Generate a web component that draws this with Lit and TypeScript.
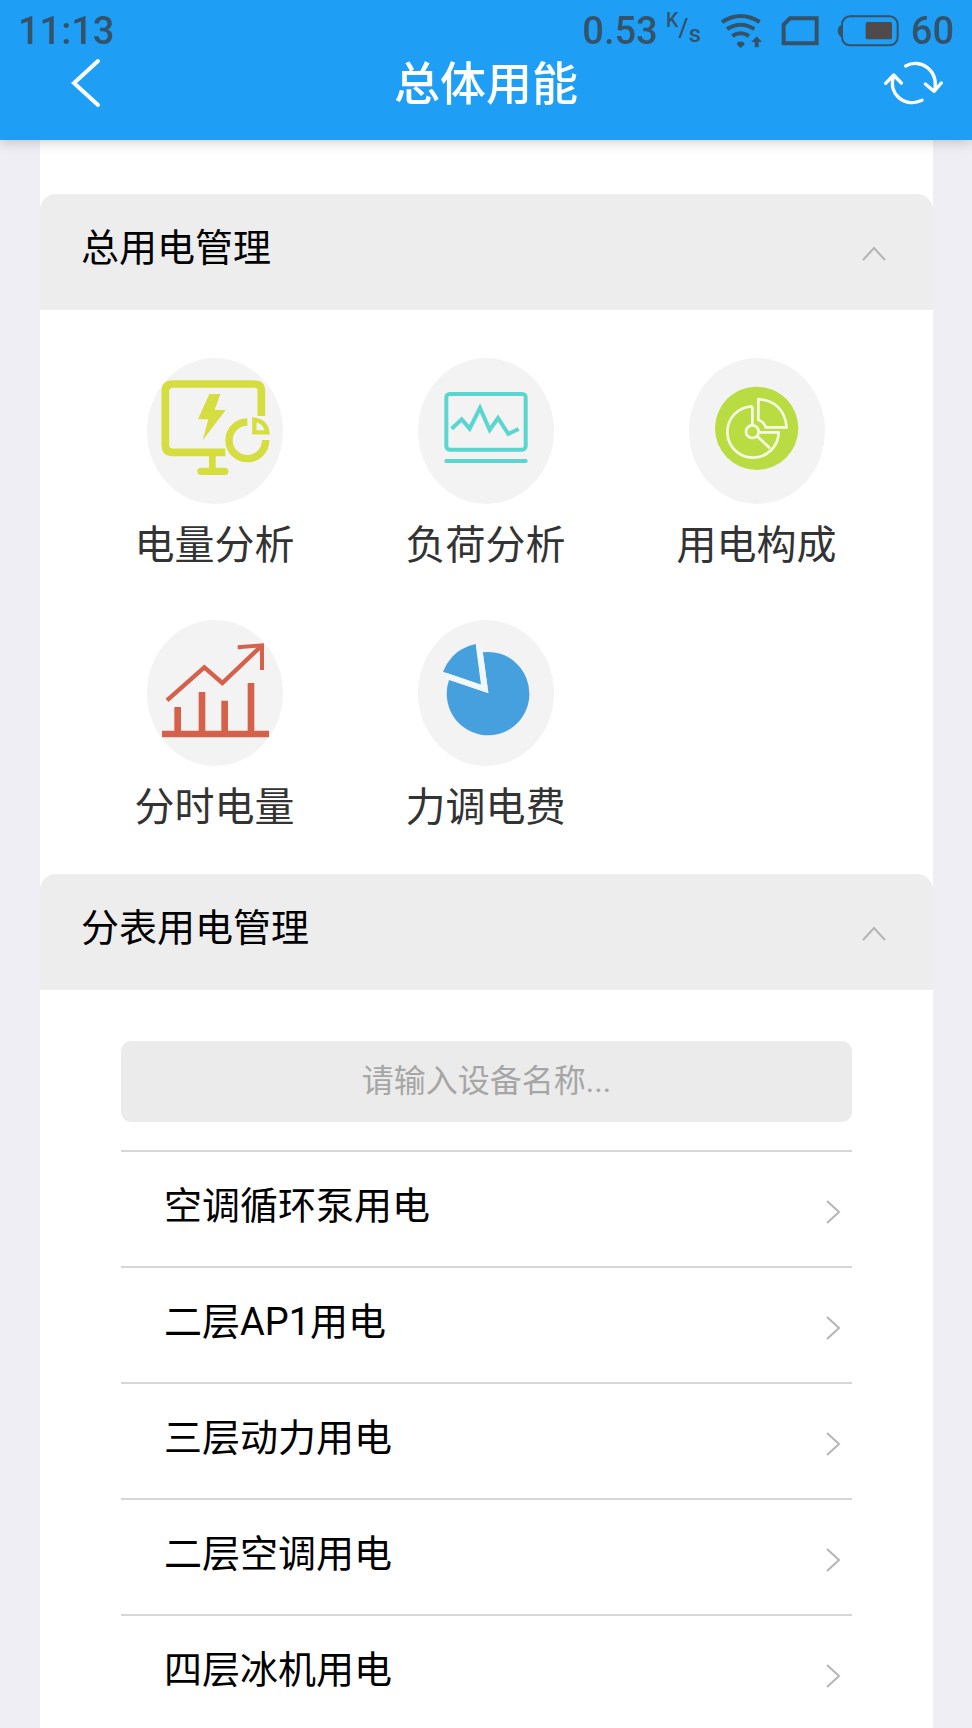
import { LitElement, html, css, svg } from "lit";
import { customElement, property, state } from "lit/decorators.js";

const FONT = css`Roboto, "Noto Sans CJK SC", sans-serif`;

@customElement("status-bar")
class StatusBar extends LitElement {
  static styles = css`
    :host {
      display: flex;
      align-items: center;
      justify-content: space-between;
      height: 56px;
      padding: 6px 18px 0;
      box-sizing: border-box;
      color: #34536a;
      font: 500 38px/50px ${FONT};
    }
    .right { display: flex; align-items: center; gap: 18px; }
    .speed { display: flex; gap: 8px; padding-right: 2px; }
    .unit { display: flex; font-size: 20px; line-height: 28px; }
    .unit .slash { padding-top: 8px; font-size: 26px; }
    .unit .low { padding-top: 14px; font-size: 24px; }
    .power { display: flex; align-items: center; gap: 12px; }
    svg { display: block; }
  `;
  render() {
    return html`
      <span>11:13</span>
      <div class="right">
        <div class="speed">
          <span>0.53</span>
          <span class="unit"><span>K</span><span class="slash">/</span><span class="low">s</span></span>
        </div>
        <svg width="42" height="36" viewBox="708 34 126 108" aria-hidden="true">
          <g fill="none" stroke="#34536a" stroke-width="12">
            <path d="M711 61Q767 25 824 61" />
            <path d="M726 82Q767 56 808 82" />
            <path d="M742 103Q767 86 792 103" />
          </g>
          <path d="M756 123Q767 116 778 123V129L767 139L756 129Z" fill="#34536a" />
          <path d="M815 104L831 121H821V137H809V121H799Z" fill="#34536a" />
        </svg>
        <svg width="38" height="30" viewBox="889 44 114 90" aria-hidden="true">
          <path d="M916 51H996V126H897V70Z" fill="none" stroke="#34536a" stroke-width="12" />
        </svg>
        <div class="power">
          <svg width="62" height="32" viewBox="1057 42 186 96" aria-hidden="true">
            <rect x="1072" y="46" width="167" height="87" rx="24" fill="none" stroke="#34536a" stroke-width="6" />
            <path d="M1074 70Q1060 74 1059 90Q1060 106 1074 110Z" fill="#34536a" />
            <rect x="1143" y="63" width="79" height="52" rx="5" fill="#504b4a" />
          </svg>
          <span>60</span>
        </div>
      </div>
    `;
  }
}

@customElement("section-panel")
class SectionPanel extends LitElement {
  @property() heading = "";
  @state() private open = true;
  static styles = css`
    :host { display: block; }
    h2 { margin: 0; font: inherit; }
    button {
      display: flex;
      align-items: center;
      justify-content: space-between;
      width: 100%;
      height: 116px;
      padding: 0 47px 0 41px;
      border: 0;
      border-radius: 16px 16px 0 0;
      background: #ededed;
      color: #000;
      font: 400 38px/56px ${FONT};
      text-align: left;
    }
    .label { padding-bottom: 8px; }
    svg { display: block; margin-top: 4px; }
    .closed { transform: rotate(180deg); }
  `;
  render() {
    return html`
      <h2>
        <button type="button" aria-expanded=${this.open} @click=${() => (this.open = !this.open)}>
          <span class="label">${this.heading}</span>
          <svg class=${this.open ? "" : "closed"} width="24" height="16" viewBox="0 0 24 16" aria-hidden="true">
            <path d="M1 14L12 2L23 14" fill="none" stroke="#b5b5b5" stroke-width="2" />
          </svg>
        </button>
      </h2>
      ${this.open ? html`<slot></slot>` : null}
    `;
  }
}

const tiles = [
  {
    label: "电量分析",
    box: "51 54 408 438",
    art: svg`
      <g fill="none" stroke="#d5dd3f">
        <path d="M394 228V152Q394 132 372 132H128Q106 132 106 154V314Q106 337 128 337H286" stroke-width="23" />
        <path d="M352 246A55 55 0 1 0 407 300" stroke-width="22" />
        <path d="M373 239V277H412Q408 245 373 239Z" stroke-width="13" />
        <path d="M213 394H284" stroke-width="22" stroke-linecap="round" />
        <path d="M247 345V390" stroke-width="20" />
      </g>
      <path d="M238 162H271L254 210H287L218 301L235 238H204Z" fill="#d5dd3f" />`,
  },
  {
    label: "负荷分析",
    box: "55 54 408 438",
    art: svg`
      <g fill="none" stroke="#5bd5cf" stroke-width="12">
        <rect x="140" y="162" width="238" height="167" rx="10" />
        <path d="M140 363H378" stroke-linecap="round" />
        <path d="M156 266L186 238L210 266L241 204L270 270L295 234L326 282L357 267" />
      </g>`,
  },
  {
    label: "用电构成",
    box: "60 54 408 438",
    art: svg`
      <circle cx="263" cy="265" r="125" fill="#b9dc42" />
      <g fill="none" stroke="#f7fce4" stroke-width="8" stroke-linejoin="round">
        <path d="M250 199A77 77 0 1 0 329 277H271" />
        <path d="M250 199V255M263 287L303 325" />
        <circle cx="250" cy="275" r="19" />
        <path d="M268 177Q345 184 353 262H290Q285 245 268 240Z" />
      </g>`,
  },
  {
    label: "分时电量",
    box: "51 60 408 438",
    art: svg`
      <g fill="none" stroke="#d5614b">
        <path d="M96 402H417" stroke-width="19" />
        <path d="M143 321V400M216 276V400M284 302V400M363 249V400" stroke-width="20" />
        <path d="M111 301L223 202L277 249L396 136" stroke-width="13" />
        <path d="M323 142L396 136V210" stroke-width="12" />
      </g>`,
  },
  {
    label: "力调电费",
    box: "55 60 408 438",
    art: svg`
      <path d="M228 132L244 255L130 215Q158 146 228 132Z" fill="#47a0de" />
      <path d="M266 279L249 157A124 125 0 1 1 148 240Z" fill="#47a0de" />
      <path d="M238 134L256 267L139 227" fill="none" stroke="#f0f8fd" stroke-width="17" />`,
  },
];

const devices = ["空调循环泵用电", "二层AP1用电", "三层动力用电", "二层空调用电", "四层冰机用电"];

@customElement("app-root")
class AppRoot extends LitElement {
  @state() private query = "";
  static styles = css`
    :host {
      display: flex;
      flex-direction: column;
      height: 100vh;
      overflow: hidden;
      background: #efeef4;
      color: #000;
      font-family: ${FONT};
    }
    header {
      flex: none;
      z-index: 1;
      padding-bottom: 28px;
      background: #1e9ff5;
      box-shadow: 0 2px 12px rgba(0, 0, 0, 0.2);
    }
    .title-row {
      display: grid;
      grid-template-columns: 1fr auto 1fr;
      align-items: center;
      height: 56px;
      padding: 0 28px;
    }
    h1 {
      margin: 0;
      color: #fff;
      font-size: 46px;
      line-height: 56px;
      font-weight: 500;
    }
    .icon-button {
      padding: 0;
      border: 0;
      background: none;
    }
    .icon-button.start { justify-self: start; padding: 0 0 2px 42px; }
    .icon-button.end { justify-self: end; padding-bottom: 2px; }
    svg { display: block; }
    main {
      flex: 1;
      min-height: 0;
      overflow-y: auto;
      scrollbar-width: none;
      margin: 0 39px 0 40px;
      padding-top: 54px;
      background: #fff;
    }
    .tiles {
      display: grid;
      grid-template-columns: repeat(3, 1fr);
      row-gap: 38px;
      padding: 48px 41px 30px 39px;
    }
    .tile {
      display: flex;
      flex-direction: column;
      align-items: center;
      gap: 6px;
      color: #333;
      font-size: 40px;
      line-height: 72px;
      text-decoration: none;
    }
    .disc { border-radius: 50%; background: #f3f3f3; }
    .meters { padding: 51px 81px 0; }
    input {
      display: block;
      box-sizing: border-box;
      width: 100%;
      height: 81px;
      margin-bottom: 28px;
      padding: 0 20px 2px;
      border: 0;
      border-radius: 10px;
      background: #ebebeb;
      font: 400 32px/48px ${FONT};
      text-align: center;
    }
    input::placeholder { color: #a6a6a6; opacity: 1; }
    ul { margin: 0; padding: 0; list-style: none; }
    li { border-top: 2px solid #d6d6d6; }
    li a {
      display: flex;
      align-items: center;
      justify-content: space-between;
      height: 114px;
      padding: 0 11px 0 43px;
      color: #000;
      font-size: 38px;
      line-height: 56px;
      text-decoration: none;
    }
    .name { padding-bottom: 6px; }
    .go { margin-top: 6px; }
  `;

  render() {
    return html`
      <header>
        <status-bar></status-bar>
        <div class="title-row">
          <button class="icon-button start" type="button" aria-label="返回">
            <svg width="32" height="50" viewBox="0 0 32 50">
              <path d="M28 3L4 25L28 47" fill="none" stroke="#fff" stroke-width="4" stroke-linecap="round" />
            </svg>
          </button>
          <h1>总体用能</h1>
          <button class="icon-button end" type="button" aria-label="刷新">
            <svg width="60" height="46" viewBox="1196 178 180 138">
              <g fill="none" stroke="#fff" stroke-width="10" stroke-linecap="round" stroke-linejoin="round">
                <path d="M1261 196C1304 172 1360 206 1348 270" />
                <path d="M1320 250L1346 272L1368 247" />
                <path d="M1310 299C1262 322 1208 284 1224 228" />
                <path d="M1201 248L1225 223L1248 247" />
              </g>
            </svg>
          </button>
        </div>
      </header>
      <main>
        <section-panel heading="总用电管理">
          <nav class="tiles">
            ${tiles.map(
              (t) => html`<a class="tile" href="#">
                <svg class="disc" width="136" height="146" viewBox=${t.box} aria-hidden="true">${t.art}</svg>
                <span>${t.label}</span>
              </a>`
            )}
          </nav>
        </section-panel>
        <section-panel heading="分表用电管理">
          <div class="meters">
            <input
              type="text"
              aria-label="设备名称"
              placeholder="请输入设备名称..."
              .value=${this.query}
              @input=${(e: Event) => (this.query = (e.target as HTMLInputElement).value)}
            />
            <ul>
              ${devices
                .filter((d) => d.includes(this.query))
                .map(
                  (d) => html`<li>
                    <a href="#">
                      <span class="name">${d}</span>
                      <svg class="go" width="16" height="24" viewBox="0 0 16 24" aria-hidden="true">
                        <path d="M2 1L14 12L2 23" fill="none" stroke="#b5b5b5" stroke-width="2" />
                      </svg>
                    </a>
                  </li>`
                )}
            </ul>
          </div>
        </section-panel>
      </main>
    `;
  }
}
